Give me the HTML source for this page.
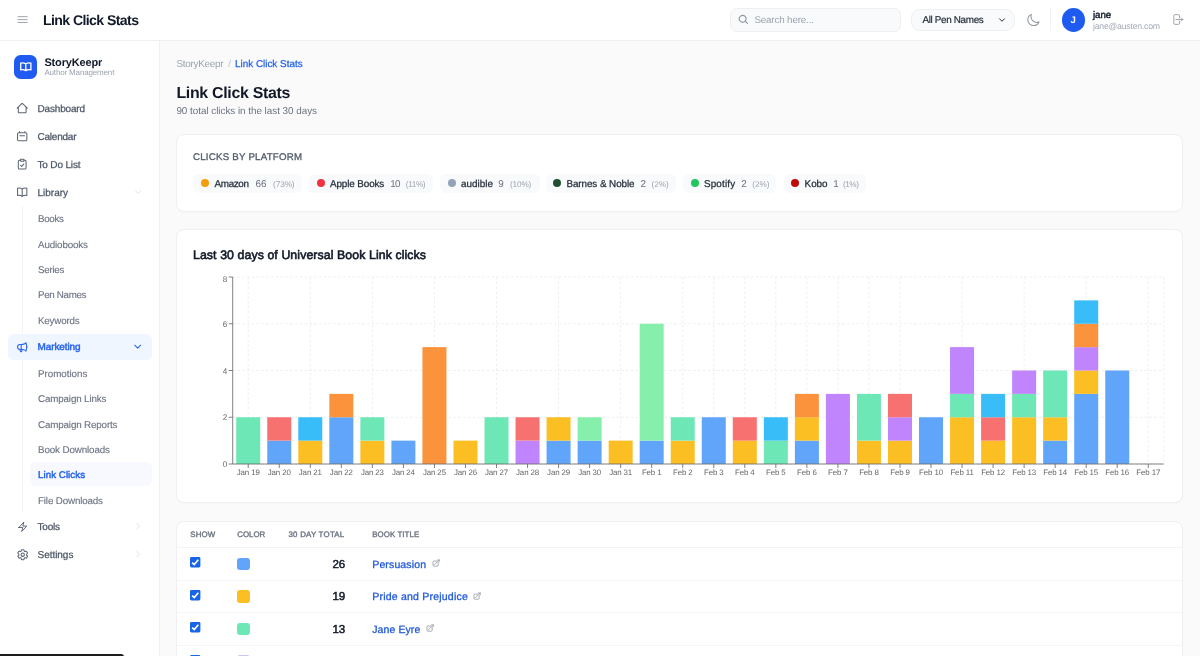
<!DOCTYPE html>
<html lang="en">
<head>
<meta charset="utf-8">
<title>Link Click Stats - StoryKeepr</title>
<style>
*{box-sizing:border-box;margin:0;padding:0}
html,body{width:1200px;height:656px;overflow:hidden;background:#fafafa;font-family:"Liberation Sans",sans-serif;text-rendering:geometricPrecision;-webkit-font-smoothing:antialiased}
body{position:relative}
.t{position:absolute;white-space:nowrap;line-height:1;display:block}
.i{position:absolute;display:block;overflow:visible}
.abs{position:absolute}
header{position:absolute;left:0;top:0;width:1200px;height:41px;background:#fff;border-bottom:1px solid #f0f0f2}
aside{position:absolute;left:0;top:41px;width:160px;height:615px;background:#fff;border-right:1px solid #f0f0f2}
.search{position:absolute;left:730px;top:7.6px;width:171px;height:24px;border:1px solid #eff0f2;border-radius:7px;background:#f9fafb}
.select{position:absolute;left:910.6px;top:8.9px;width:104.8px;height:21.8px;border:1px solid #eff0f2;border-radius:9px;background:#f9fafb}
.vdiv{position:absolute;left:1050px;top:8px;width:1px;height:23px;background:#f1f2f4}
.avatar{position:absolute;left:1061.5px;top:7.9px;width:23.5px;height:23.7px;border-radius:50%;background:#1f5bf1}
.logo{position:absolute;left:13.6px;top:54.8px;width:23.2px;height:24.1px;border-radius:6.6px;background:#1f5bf1}
.guide{position:absolute;left:21.6px;width:1px;background:#f3f4f6}
.act{position:absolute;background:#eff6ff;border-radius:6px}
.card{position:absolute;left:176.4px;width:1007px;background:#fff;border:1px solid #f0f0f2;border-radius:8px;box-shadow:0 1px 2px rgba(0,0,0,.02)}
.chip{position:absolute;top:173.8px;height:19.4px;border-radius:6px;background:#f9fafb}
.chip i{position:absolute;left:7.6px;top:5.7px;width:8px;height:8px;border-radius:50%}
.sw{position:absolute;left:237px;width:12.7px;height:12.5px;border-radius:3px}
.hr{position:absolute;left:177.4px;width:1005px;height:1px;background:#f4f5f7}
.chart{position:absolute;left:176px;top:229px;will-change:transform}
.tx{position:absolute;left:0;top:0;width:1200px;height:656px;will-change:transform}
.blk{position:absolute;left:0;top:654px;width:123.5px;height:3px;background:#1c1c1c;border-top-right-radius:3px}
</style>
</head>
<body>
<header>
<div class="search"></div>
<div class="select"></div>
<div class="vdiv"></div>
<div class="avatar"></div>
</header>
<aside></aside>
<div class="logo"></div>
<div class="guide" style="top:206px;height:127px"></div>
<div class="guide" style="top:360px;height:152px"></div>
<div class="act" style="left:8px;top:333.5px;width:143.6px;height:26px"></div>
<div class="act" style="left:30px;top:462.4px;width:121.6px;height:24px;background:#f7f9fe"></div>
<main>
<section class="card" style="top:134px;height:77.6px"></section>
<section class="card" style="top:228.6px;height:274.8px"></section>
<section class="card" style="top:520.6px;height:160px"></section>
</main>
<div class="chip" style="left:193.2px;width:108.6px"><i style="background:#f59e0b"></i></div><div class="chip" style="left:309.0px;width:123.5px"><i style="background:#ef3340"></i></div><div class="chip" style="left:440.1px;width:99.9px"><i style="background:#94a3b8"></i></div><div class="chip" style="left:545.7px;width:130.3px"><i style="background:#1f5130"></i></div><div class="chip" style="left:683.4px;width:93.1px"><i style="background:#22c55e"></i></div><div class="chip" style="left:783.9px;width:82.1px"><i style="background:#bf0a0a"></i></div>
<div class="hr" style="top:547.2px;background:#f1f2f4"></div>
<div class="hr" style="top:579.8px"></div>
<div class="hr" style="top:612.3px"></div>
<div class="hr" style="top:644.8px"></div>
<div class="sw" style="top:557.6px;background:#60a5fa"></div><div class="sw" style="top:590.1px;background:#fbbf24"></div><div class="sw" style="top:622.6px;background:#6ee7b7"></div><div class="sw" style="top:655.1px;background:#c7c5f4"></div><svg class="i" style="left:190.2px;top:557.4px" width="10.4" height="10.4" viewBox="0 0 13 13"><rect x="0" y="0" width="13" height="13" rx="1.8" fill="#1764e6"/><path d="M2.7 6.9 5.3 9.4 10.4 3.5" fill="none" stroke="#fff" stroke-width="2.2" stroke-linecap="butt" stroke-linejoin="miter"/></svg><svg class="i" style="left:190.2px;top:589.9px" width="10.4" height="10.4" viewBox="0 0 13 13"><rect x="0" y="0" width="13" height="13" rx="1.8" fill="#1764e6"/><path d="M2.7 6.9 5.3 9.4 10.4 3.5" fill="none" stroke="#fff" stroke-width="2.2" stroke-linecap="butt" stroke-linejoin="miter"/></svg><svg class="i" style="left:190.2px;top:622.4px" width="10.4" height="10.4" viewBox="0 0 13 13"><rect x="0" y="0" width="13" height="13" rx="1.8" fill="#1764e6"/><path d="M2.7 6.9 5.3 9.4 10.4 3.5" fill="none" stroke="#fff" stroke-width="2.2" stroke-linecap="butt" stroke-linejoin="miter"/></svg><svg class="i" style="left:190.2px;top:654.9px" width="10.4" height="10.4" viewBox="0 0 13 13"><rect x="0" y="0" width="13" height="13" rx="1.8" fill="#1764e6"/><path d="M2.7 6.9 5.3 9.4 10.4 3.5" fill="none" stroke="#fff" stroke-width="2.2" stroke-linecap="butt" stroke-linejoin="miter"/></svg>
<svg class="chart" width="1008" height="275" viewBox="176 229 1008 275" font-family="Liberation Sans, sans-serif">
<g stroke="#eceef1" stroke-width="1" stroke-dasharray="2.4 2.4" fill="none"><line x1="232.7" y1="464.00" x2="1163.8" y2="464.00"/><line x1="232.7" y1="417.25" x2="1163.8" y2="417.25"/><line x1="232.7" y1="370.50" x2="1163.8" y2="370.50"/><line x1="232.7" y1="323.75" x2="1163.8" y2="323.75"/><line x1="232.7" y1="277.00" x2="1163.8" y2="277.00"/><line x1="248.22" y1="277.0" x2="248.22" y2="464.0"/><line x1="310.29" y1="277.0" x2="310.29" y2="464.0"/><line x1="372.37" y1="277.0" x2="372.37" y2="464.0"/><line x1="434.44" y1="277.0" x2="434.44" y2="464.0"/><line x1="496.51" y1="277.0" x2="496.51" y2="464.0"/><line x1="558.59" y1="277.0" x2="558.59" y2="464.0"/><line x1="620.66" y1="277.0" x2="620.66" y2="464.0"/><line x1="682.73" y1="277.0" x2="682.73" y2="464.0"/><line x1="713.77" y1="277.0" x2="713.77" y2="464.0"/><line x1="744.81" y1="277.0" x2="744.81" y2="464.0"/><line x1="775.84" y1="277.0" x2="775.84" y2="464.0"/><line x1="806.88" y1="277.0" x2="806.88" y2="464.0"/><line x1="837.91" y1="277.0" x2="837.91" y2="464.0"/><line x1="868.95" y1="277.0" x2="868.95" y2="464.0"/><line x1="899.99" y1="277.0" x2="899.99" y2="464.0"/><line x1="962.06" y1="277.0" x2="962.06" y2="464.0"/><line x1="1024.13" y1="277.0" x2="1024.13" y2="464.0"/><line x1="1086.21" y1="277.0" x2="1086.21" y2="464.0"/><line x1="1148.28" y1="277.0" x2="1148.28" y2="464.0"/><line x1="1163.8" y1="277.0" x2="1163.8" y2="464.0"/></g>
<rect x="236.22" y="417.25" width="24.00" height="46.75" fill="#6ee7b7"/>
<rect x="267.25" y="440.62" width="24.00" height="23.38" fill="#60a5fa"/>
<rect x="267.25" y="417.25" width="24.00" height="23.38" fill="#f87171"/>
<rect x="298.29" y="440.62" width="24.00" height="23.38" fill="#fbbf24"/>
<rect x="298.29" y="417.25" width="24.00" height="23.38" fill="#38bdf8"/>
<rect x="329.33" y="417.25" width="24.00" height="46.75" fill="#60a5fa"/>
<rect x="329.33" y="393.88" width="24.00" height="23.38" fill="#fb923c"/>
<rect x="360.36" y="440.62" width="24.00" height="23.38" fill="#fbbf24"/>
<rect x="360.36" y="417.25" width="24.00" height="23.38" fill="#6ee7b7"/>
<rect x="391.40" y="440.62" width="24.00" height="23.38" fill="#60a5fa"/>
<rect x="422.44" y="347.12" width="24.00" height="116.88" fill="#fb923c"/>
<rect x="453.47" y="440.62" width="24.00" height="23.38" fill="#fbbf24"/>
<rect x="484.51" y="417.25" width="24.00" height="46.75" fill="#6ee7b7"/>
<rect x="515.55" y="440.62" width="24.00" height="23.38" fill="#c084fc"/>
<rect x="515.55" y="417.25" width="24.00" height="23.38" fill="#f87171"/>
<rect x="546.58" y="440.62" width="24.00" height="23.38" fill="#60a5fa"/>
<rect x="546.58" y="417.25" width="24.00" height="23.38" fill="#fbbf24"/>
<rect x="577.62" y="440.62" width="24.00" height="23.38" fill="#60a5fa"/>
<rect x="577.62" y="417.25" width="24.00" height="23.38" fill="#86efac"/>
<rect x="608.66" y="440.62" width="24.00" height="23.38" fill="#fbbf24"/>
<rect x="639.69" y="440.62" width="24.00" height="23.38" fill="#60a5fa"/>
<rect x="639.69" y="323.75" width="24.00" height="116.88" fill="#86efac"/>
<rect x="670.73" y="440.62" width="24.00" height="23.38" fill="#fbbf24"/>
<rect x="670.73" y="417.25" width="24.00" height="23.38" fill="#6ee7b7"/>
<rect x="701.77" y="417.25" width="24.00" height="46.75" fill="#60a5fa"/>
<rect x="732.80" y="440.62" width="24.00" height="23.38" fill="#fbbf24"/>
<rect x="732.80" y="417.25" width="24.00" height="23.38" fill="#f87171"/>
<rect x="763.84" y="440.62" width="24.00" height="23.38" fill="#6ee7b7"/>
<rect x="763.84" y="417.25" width="24.00" height="23.38" fill="#38bdf8"/>
<rect x="794.88" y="440.62" width="24.00" height="23.38" fill="#60a5fa"/>
<rect x="794.88" y="417.25" width="24.00" height="23.38" fill="#fbbf24"/>
<rect x="794.88" y="393.88" width="24.00" height="23.38" fill="#fb923c"/>
<rect x="825.91" y="393.88" width="24.00" height="70.12" fill="#c084fc"/>
<rect x="856.95" y="440.62" width="24.00" height="23.38" fill="#fbbf24"/>
<rect x="856.95" y="393.88" width="24.00" height="46.75" fill="#6ee7b7"/>
<rect x="887.99" y="440.62" width="24.00" height="23.38" fill="#fbbf24"/>
<rect x="887.99" y="417.25" width="24.00" height="23.38" fill="#c084fc"/>
<rect x="887.99" y="393.88" width="24.00" height="23.38" fill="#f87171"/>
<rect x="919.02" y="417.25" width="24.00" height="46.75" fill="#60a5fa"/>
<rect x="950.06" y="417.25" width="24.00" height="46.75" fill="#fbbf24"/>
<rect x="950.06" y="393.88" width="24.00" height="23.38" fill="#6ee7b7"/>
<rect x="950.06" y="347.12" width="24.00" height="46.75" fill="#c084fc"/>
<rect x="981.10" y="440.62" width="24.00" height="23.38" fill="#fbbf24"/>
<rect x="981.10" y="417.25" width="24.00" height="23.38" fill="#f87171"/>
<rect x="981.10" y="393.88" width="24.00" height="23.38" fill="#38bdf8"/>
<rect x="1012.13" y="417.25" width="24.00" height="46.75" fill="#fbbf24"/>
<rect x="1012.13" y="393.88" width="24.00" height="23.38" fill="#6ee7b7"/>
<rect x="1012.13" y="370.50" width="24.00" height="23.38" fill="#c084fc"/>
<rect x="1043.17" y="440.62" width="24.00" height="23.38" fill="#60a5fa"/>
<rect x="1043.17" y="417.25" width="24.00" height="23.38" fill="#fbbf24"/>
<rect x="1043.17" y="370.50" width="24.00" height="46.75" fill="#6ee7b7"/>
<rect x="1074.21" y="393.88" width="24.00" height="70.12" fill="#60a5fa"/>
<rect x="1074.21" y="370.50" width="24.00" height="23.38" fill="#fbbf24"/>
<rect x="1074.21" y="347.12" width="24.00" height="23.38" fill="#c084fc"/>
<rect x="1074.21" y="323.75" width="24.00" height="23.38" fill="#fb923c"/>
<rect x="1074.21" y="300.38" width="24.00" height="23.38" fill="#38bdf8"/>
<rect x="1105.25" y="370.50" width="24.00" height="93.50" fill="#60a5fa"/>
<g stroke="#6a6a6a" stroke-width="0.85" fill="none"><line x1="232.7" y1="277.0" x2="232.7" y2="464.0"/><line x1="232.7" y1="464.0" x2="1163.8" y2="464.0"/><line x1="228.7" y1="464.00" x2="232.7" y2="464.00"/><line x1="228.7" y1="417.25" x2="232.7" y2="417.25"/><line x1="228.7" y1="370.50" x2="232.7" y2="370.50"/><line x1="228.7" y1="323.75" x2="232.7" y2="323.75"/><line x1="228.7" y1="277.00" x2="232.7" y2="277.00"/><line x1="248.22" y1="464.0" x2="248.22" y2="468.0"/><line x1="279.25" y1="464.0" x2="279.25" y2="468.0"/><line x1="310.29" y1="464.0" x2="310.29" y2="468.0"/><line x1="341.33" y1="464.0" x2="341.33" y2="468.0"/><line x1="372.37" y1="464.0" x2="372.37" y2="468.0"/><line x1="403.40" y1="464.0" x2="403.40" y2="468.0"/><line x1="434.44" y1="464.0" x2="434.44" y2="468.0"/><line x1="465.47" y1="464.0" x2="465.47" y2="468.0"/><line x1="496.51" y1="464.0" x2="496.51" y2="468.0"/><line x1="527.55" y1="464.0" x2="527.55" y2="468.0"/><line x1="558.59" y1="464.0" x2="558.59" y2="468.0"/><line x1="589.62" y1="464.0" x2="589.62" y2="468.0"/><line x1="620.66" y1="464.0" x2="620.66" y2="468.0"/><line x1="651.69" y1="464.0" x2="651.69" y2="468.0"/><line x1="682.73" y1="464.0" x2="682.73" y2="468.0"/><line x1="713.77" y1="464.0" x2="713.77" y2="468.0"/><line x1="744.81" y1="464.0" x2="744.81" y2="468.0"/><line x1="775.84" y1="464.0" x2="775.84" y2="468.0"/><line x1="806.88" y1="464.0" x2="806.88" y2="468.0"/><line x1="837.91" y1="464.0" x2="837.91" y2="468.0"/><line x1="868.95" y1="464.0" x2="868.95" y2="468.0"/><line x1="899.99" y1="464.0" x2="899.99" y2="468.0"/><line x1="931.02" y1="464.0" x2="931.02" y2="468.0"/><line x1="962.06" y1="464.0" x2="962.06" y2="468.0"/><line x1="993.10" y1="464.0" x2="993.10" y2="468.0"/><line x1="1024.13" y1="464.0" x2="1024.13" y2="468.0"/><line x1="1055.17" y1="464.0" x2="1055.17" y2="468.0"/><line x1="1086.21" y1="464.0" x2="1086.21" y2="468.0"/><line x1="1117.24" y1="464.0" x2="1117.24" y2="468.0"/><line x1="1148.28" y1="464.0" x2="1148.28" y2="468.0"/></g>
<g fill="#6a6a6a" font-size="8.2"><text x="227.29999999999998" y="467.00" text-anchor="end">0</text><text x="227.29999999999998" y="420.25" text-anchor="end">2</text><text x="227.29999999999998" y="373.50" text-anchor="end">4</text><text x="227.29999999999998" y="326.75" text-anchor="end">6</text><text x="227.29999999999998" y="282.30" text-anchor="end">8</text></g>
<g fill="#666" font-size="7.9" letter-spacing="-0.12"><text x="248.22" y="474.7" text-anchor="middle">Jan 19</text><text x="279.25" y="474.7" text-anchor="middle">Jan 20</text><text x="310.29" y="474.7" text-anchor="middle">Jan 21</text><text x="341.33" y="474.7" text-anchor="middle">Jan 22</text><text x="372.37" y="474.7" text-anchor="middle">Jan 23</text><text x="403.40" y="474.7" text-anchor="middle">Jan 24</text><text x="434.44" y="474.7" text-anchor="middle">Jan 25</text><text x="465.47" y="474.7" text-anchor="middle">Jan 26</text><text x="496.51" y="474.7" text-anchor="middle">Jan 27</text><text x="527.55" y="474.7" text-anchor="middle">Jan 28</text><text x="558.59" y="474.7" text-anchor="middle">Jan 29</text><text x="589.62" y="474.7" text-anchor="middle">Jan 30</text><text x="620.66" y="474.7" text-anchor="middle">Jan 31</text><text x="651.69" y="474.7" text-anchor="middle">Feb 1</text><text x="682.73" y="474.7" text-anchor="middle">Feb 2</text><text x="713.77" y="474.7" text-anchor="middle">Feb 3</text><text x="744.81" y="474.7" text-anchor="middle">Feb 4</text><text x="775.84" y="474.7" text-anchor="middle">Feb 5</text><text x="806.88" y="474.7" text-anchor="middle">Feb 6</text><text x="837.91" y="474.7" text-anchor="middle">Feb 7</text><text x="868.95" y="474.7" text-anchor="middle">Feb 8</text><text x="899.99" y="474.7" text-anchor="middle">Feb 9</text><text x="931.02" y="474.7" text-anchor="middle">Feb 10</text><text x="962.06" y="474.7" text-anchor="middle">Feb 11</text><text x="993.10" y="474.7" text-anchor="middle">Feb 12</text><text x="1024.13" y="474.7" text-anchor="middle">Feb 13</text><text x="1055.17" y="474.7" text-anchor="middle">Feb 14</text><text x="1086.21" y="474.7" text-anchor="middle">Feb 15</text><text x="1117.24" y="474.7" text-anchor="middle">Feb 16</text><text x="1148.28" y="474.7" text-anchor="middle">Feb 17</text></g>
</svg>
<svg class="i" style="left:17px;top:14px" width="11.2" height="11.2" viewBox="0 0 24 24" fill="none" stroke="#9a9ea6" stroke-width="2.0" stroke-linecap="round" stroke-linejoin="round" ><path d="M1.3 5.7h21.4M1.3 12h21.4M1.3 18.2h21.4" stroke-linecap="butt"/></svg>
<svg class="i" style="left:738.2px;top:14.2px" width="10.8" height="10.8" viewBox="0 0 24 24" fill="none" stroke="#9299a6" stroke-width="2.6" stroke-linecap="round" stroke-linejoin="round" ><path d="m21 21-5.197-5.197m0 0A7.5 7.5 0 1 0 5.196 5.196a7.5 7.5 0 0 0 10.607 10.607Z"/></svg>
<svg class="i" style="left:997.6px;top:15.7px" width="8.0" height="8.0" viewBox="0 0 24 24" fill="none" stroke="#2f3541" stroke-width="3.0" stroke-linecap="round" stroke-linejoin="round" ><path d="m19.5 8.25-7.5 7.5-7.5-7.5"/></svg>
<svg class="i" style="left:1025.6px;top:12.7px" width="14.4" height="14.4" viewBox="0 0 24 24" fill="none" stroke="#8f949c" stroke-width="1.7" stroke-linecap="round" stroke-linejoin="round" ><path d="M21.752 15.002A9.72 9.72 0 0 1 18 15.75c-5.385 0-9.75-4.365-9.75-9.75 0-1.33.266-2.597.748-3.752A9.753 9.753 0 0 0 3 11.25C3 16.635 7.365 21 12.75 21a9.753 9.753 0 0 0 9.002-5.998Z"/></svg>
<svg class="i" style="left:1170.6px;top:12.9px" width="13" height="13" viewBox="0 0 24 24" fill="none" stroke="#9a9ea6" stroke-width="1.7" stroke-linecap="round" stroke-linejoin="round" ><path d="M15.75 9V5.25A2.25 2.25 0 0 0 13.5 3h-6a2.25 2.25 0 0 0-2.25 2.25v13.5A2.25 2.25 0 0 0 7.5 21h6a2.25 2.25 0 0 0 2.25-2.25V15m3 0 3-3m0 0-3-3m3 3H9"/></svg>
<svg class="i" style="left:18.55px;top:59.9px" width="13.6" height="13.6" viewBox="0 0 24 24" fill="none" stroke="#ffffff" stroke-width="2.3" stroke-linecap="round" stroke-linejoin="round" ><g transform="translate(0 12) scale(1 .84) translate(0 -12)"><path d="M12 6.042A8.967 8.967 0 0 0 6 3.75c-1.052 0-2.062.18-3 .512v14.25A8.987 8.987 0 0 1 6 18c2.305 0 4.408.867 6 2.292m0-14.25a8.966 8.966 0 0 1 6-2.292c1.052 0 2.062.18 3 .512v14.25A8.987 8.987 0 0 0 18 18a8.967 8.967 0 0 0-6 2.292m0-14.25v14.25"/></g></svg>
<svg class="i" style="left:16.2px;top:101.9px" width="12.4" height="12.4" viewBox="0 0 24 24" fill="none" stroke="#5b6472" stroke-width="2.0" stroke-linecap="round" stroke-linejoin="round" ><path d="m2.25 12 8.954-8.955c.44-.439 1.152-.439 1.591 0L21.75 12M4.5 9.75v10.125c0 .621.504 1.125 1.125 1.125h12.75c.621 0 1.125-.504 1.125-1.125V9.75"/></svg>
<svg class="i" style="left:16.2px;top:129.9px" width="12.4" height="12.4" viewBox="0 0 24 24" fill="none" stroke="#5b6472" stroke-width="2.0" stroke-linecap="round" stroke-linejoin="round" ><path d="M6.75 3v2.25M17.25 3v2.25M3 18.75V7.5a2.25 2.25 0 0 1 2.25-2.25h13.5A2.25 2.25 0 0 1 21 7.5v11.25A2.25 2.25 0 0 1 18.75 21H5.25A2.25 2.25 0 0 1 3 18.75ZM7.5 11.25h9"/></svg>
<svg class="i" style="left:16.2px;top:157.9px" width="12.4" height="12.4" viewBox="0 0 24 24" fill="none" stroke="#5b6472" stroke-width="2.0" stroke-linecap="round" stroke-linejoin="round" ><rect x="8.5" y="2.5" width="7" height="3.6" rx="1"/><path d="M15.5 4.3h1.75a2.25 2.25 0 0 1 2.25 2.25v12.7a2.25 2.25 0 0 1-2.25 2.25H6.75a2.25 2.25 0 0 1-2.25-2.25V6.55A2.25 2.25 0 0 1 6.75 4.3H8.5M9 14.2l2.1 2.1 3.9-4.4"/></svg>
<svg class="i" style="left:16.2px;top:185.9px" width="12.4" height="12.4" viewBox="0 0 24 24" fill="none" stroke="#5b6472" stroke-width="2.0" stroke-linecap="round" stroke-linejoin="round" ><path d="M12 6.042A8.967 8.967 0 0 0 6 3.75c-1.052 0-2.062.18-3 .512v14.25A8.987 8.987 0 0 1 6 18c2.305 0 4.408.867 6 2.292m0-14.25a8.966 8.966 0 0 1 6-2.292c1.052 0 2.062.18 3 .512v14.25A8.987 8.987 0 0 0 18 18a8.967 8.967 0 0 0-6 2.292m0-14.25v14.25"/></svg>
<svg class="i" style="left:133.8px;top:187.8px" width="8.4" height="8.4" viewBox="0 0 24 24" fill="none" stroke="#d1d5db" stroke-width="2" stroke-linecap="round" stroke-linejoin="round" ><path d="m19.5 8.25-7.5 7.5-7.5-7.5"/></svg>
<svg class="i" style="left:16.4px;top:340.6px" width="12.6" height="12.6" viewBox="0 0 24 24" fill="none" stroke="#2563eb" stroke-width="2.0" stroke-linecap="round" stroke-linejoin="round" ><path d="M10.34 15.84c-.688-.06-1.386-.09-2.09-.09H7.5a4.5 4.5 0 1 1 0-9h.75c.704 0 1.402-.03 2.09-.09m0 9.18c.253.962.584 1.892.985 2.783.247.55.06 1.21-.463 1.511l-.657.38c-.551.318-1.26.117-1.527-.461a20.845 20.845 0 0 1-1.44-4.282m3.102.069a18.03 18.03 0 0 1-.59-4.59c0-1.586.205-3.124.59-4.59m0 9.18a23.848 23.848 0 0 1 8.835 2.535M10.34 6.66a23.847 23.847 0 0 0 8.835-2.535m0 0A23.74 23.74 0 0 0 18.795 3m.38 1.125a23.91 23.91 0 0 1 1.014 5.395m-1.014 8.855c-.118.38-.245.754-.38 1.125m.38-1.125a23.91 23.91 0 0 0 1.014-5.395m0-3.46c.495.413.811 1.035.811 1.73 0 .695-.316 1.317-.811 1.73m0-3.46a24.347 24.347 0 0 1 0 3.46"/></svg>
<svg class="i" style="left:133.4px;top:342.4px" width="9.4" height="9.4" viewBox="0 0 24 24" fill="none" stroke="#2563eb" stroke-width="2.6" stroke-linecap="round" stroke-linejoin="round" ><path d="m19.5 8.25-7.5 7.5-7.5-7.5"/></svg>
<svg class="i" style="left:17.1px;top:521.2px" width="11.6" height="11.6" viewBox="0 0 24 24" fill="none" stroke="#5b6472" stroke-width="2.0" stroke-linecap="round" stroke-linejoin="round" ><path d="m3.75 13.5 10.5-11.25L12 10.5h8.25L9.75 21.75 12 13.5H3.75Z"/></svg>
<svg class="i" style="left:133.8px;top:522.4px" width="8.4" height="8.4" viewBox="0 0 24 24" fill="none" stroke="#d1d5db" stroke-width="2" stroke-linecap="round" stroke-linejoin="round" ><path d="m8.25 4.5 7.5 7.5-7.5 7.5"/></svg>
<svg class="i" style="left:16.0px;top:547.9px" width="13.4" height="13.4" viewBox="0 0 24 24" fill="none" stroke="#5b6472" stroke-width="1.9" stroke-linecap="round" stroke-linejoin="round" ><path d="M9.594 3.94c.09-.542.56-.94 1.11-.94h2.593c.55 0 1.02.398 1.11.94l.213 1.281c.063.374.313.686.645.87.074.04.147.083.22.127.325.196.72.257 1.075.124l1.217-.456a1.125 1.125 0 0 1 1.37.49l1.296 2.247a1.125 1.125 0 0 1-.26 1.431l-1.003.827c-.293.241-.438.613-.43.992a7.723 7.723 0 0 1 0 .255c-.008.378.137.75.43.991l1.004.827c.424.35.534.955.26 1.43l-1.298 2.247a1.125 1.125 0 0 1-1.369.491l-1.217-.456c-.355-.133-.75-.072-1.076.124a6.47 6.47 0 0 1-.22.128c-.331.183-.581.495-.644.869l-.213 1.281c-.09.543-.56.94-1.11.94h-2.594c-.55 0-1.019-.398-1.11-.94l-.213-1.281c-.062-.374-.312-.686-.644-.87a6.52 6.52 0 0 1-.22-.127c-.325-.196-.72-.257-1.076-.124l-1.217.456a1.125 1.125 0 0 1-1.369-.49l-1.297-2.247a1.125 1.125 0 0 1 .26-1.431l1.004-.827c.292-.24.437-.613.43-.991a6.932 6.932 0 0 1 0-.255c.007-.38-.138-.751-.43-.992l-1.004-.827a1.125 1.125 0 0 1-.26-1.43l1.297-2.247a1.125 1.125 0 0 1 1.37-.491l1.216.456c.356.133.751.072 1.076-.124.072-.044.146-.086.22-.128.332-.183.582-.495.644-.869l.214-1.28Z"/><path d="M15 12a3 3 0 1 1-6 0 3 3 0 0 1 6 0Z"/></svg>
<svg class="i" style="left:133.8px;top:550.4px" width="8.4" height="8.4" viewBox="0 0 24 24" fill="none" stroke="#d1d5db" stroke-width="2" stroke-linecap="round" stroke-linejoin="round" ><path d="m8.25 4.5 7.5 7.5-7.5 7.5"/></svg>
<svg class="i" style="left:432.2px;top:559.2px" width="8.2" height="8.2" viewBox="0 0 24 24" fill="none" stroke="#989da6" stroke-width="2.5" stroke-linecap="round" stroke-linejoin="round" ><path d="M13.5 6H5.25A2.25 2.25 0 0 0 3 8.25v10.5A2.25 2.25 0 0 0 5.25 21h10.5A2.25 2.25 0 0 0 18 18.75V10.5m-10.5 6L21 3m0 0h-5.25M21 3v5.25"/></svg>
<svg class="i" style="left:473.4px;top:591.7px" width="8.2" height="8.2" viewBox="0 0 24 24" fill="none" stroke="#989da6" stroke-width="2.5" stroke-linecap="round" stroke-linejoin="round" ><path d="M13.5 6H5.25A2.25 2.25 0 0 0 3 8.25v10.5A2.25 2.25 0 0 0 5.25 21h10.5A2.25 2.25 0 0 0 18 18.75V10.5m-10.5 6L21 3m0 0h-5.25M21 3v5.25"/></svg>
<svg class="i" style="left:425.9px;top:624.2px" width="8.2" height="8.2" viewBox="0 0 24 24" fill="none" stroke="#989da6" stroke-width="2.5" stroke-linecap="round" stroke-linejoin="round" ><path d="M13.5 6H5.25A2.25 2.25 0 0 0 3 8.25v10.5A2.25 2.25 0 0 0 5.25 21h10.5A2.25 2.25 0 0 0 18 18.75V10.5m-10.5 6L21 3m0 0h-5.25M21 3v5.25"/></svg>
<div class="tx">
<span class="t" style="top:13px;font-size:14.1px;color:#111827;font-weight:700;letter-spacing:-0.597px;left:43.00px;">Link Click Stats</span>
<span class="t" style="top:16px;font-size:9.8px;color:#9ca3af;letter-spacing:-0.150px;left:754.40px;">Search here...</span>
<span class="t" style="top:16px;font-size:9.9px;color:#1f2937;letter-spacing:-0.339px;left:922.50px;-webkit-text-stroke:0.2px #1f2937;">All Pen Names</span>
<span class="t" style="top:16px;font-size:9.6px;color:#ffffff;font-weight:700;left:973.10px;width:200px;text-align:center;">J</span>
<span class="t" style="top:11px;font-size:9.7px;color:#111827;letter-spacing:-0.043px;left:1093.00px;-webkit-text-stroke:0.4px #111827;">jane</span>
<span class="t" style="top:22px;font-size:8.7px;color:#a3a9b4;letter-spacing:-0.225px;left:1093.00px;">jane@austen.com</span>
<span class="t" style="top:58px;font-size:11.0px;color:#111827;font-weight:700;letter-spacing:-0.144px;left:44.40px;">StoryKeepr</span>
<span class="t" style="top:69px;font-size:8.0px;color:#9ca3af;letter-spacing:-0.156px;left:44.40px;">Author Management</span>
<span class="t" style="top:105px;font-size:10.0px;color:#4b5563;letter-spacing:-0.178px;left:37.50px;-webkit-text-stroke:0.25px #4b5563;">Dashboard</span>
<span class="t" style="top:133px;font-size:10.0px;color:#4b5563;letter-spacing:-0.228px;left:37.50px;-webkit-text-stroke:0.25px #4b5563;">Calendar</span>
<span class="t" style="top:161px;font-size:10.0px;color:#4b5563;letter-spacing:-0.163px;left:37.50px;-webkit-text-stroke:0.25px #4b5563;">To Do List</span>
<span class="t" style="top:189px;font-size:10.0px;color:#4b5563;letter-spacing:0.004px;left:37.50px;-webkit-text-stroke:0.25px #4b5563;">Library</span>
<span class="t" style="top:343px;font-size:10.0px;color:#2563eb;letter-spacing:-0.113px;left:37.50px;-webkit-text-stroke:0.45px #2563eb;">Marketing</span>
<span class="t" style="top:523px;font-size:10.0px;color:#4b5563;letter-spacing:-0.215px;left:37.50px;-webkit-text-stroke:0.25px #4b5563;">Tools</span>
<span class="t" style="top:551px;font-size:10.0px;color:#4b5563;letter-spacing:-0.034px;left:37.50px;-webkit-text-stroke:0.25px #4b5563;">Settings</span>
<span class="t" style="top:215px;font-size:9.8px;color:#6b7280;letter-spacing:-0.334px;left:38.00px;-webkit-text-stroke:0.12px #6b7280;">Books</span>
<span class="t" style="top:241px;font-size:9.8px;color:#6b7280;letter-spacing:-0.134px;left:38.00px;-webkit-text-stroke:0.12px #6b7280;">Audiobooks</span>
<span class="t" style="top:266px;font-size:9.8px;color:#6b7280;letter-spacing:-0.276px;left:38.00px;-webkit-text-stroke:0.12px #6b7280;">Series</span>
<span class="t" style="top:291px;font-size:9.8px;color:#6b7280;letter-spacing:-0.336px;left:38.00px;-webkit-text-stroke:0.12px #6b7280;">Pen Names</span>
<span class="t" style="top:317px;font-size:9.8px;color:#6b7280;letter-spacing:-0.188px;left:38.00px;-webkit-text-stroke:0.12px #6b7280;">Keywords</span>
<span class="t" style="top:370px;font-size:9.8px;color:#6b7280;letter-spacing:-0.029px;left:38.00px;-webkit-text-stroke:0.12px #6b7280;">Promotions</span>
<span class="t" style="top:395px;font-size:9.8px;color:#6b7280;letter-spacing:-0.142px;left:38.00px;-webkit-text-stroke:0.12px #6b7280;">Campaign Links</span>
<span class="t" style="top:421px;font-size:9.8px;color:#6b7280;letter-spacing:-0.146px;left:38.00px;-webkit-text-stroke:0.12px #6b7280;">Campaign Reports</span>
<span class="t" style="top:446px;font-size:9.8px;color:#6b7280;letter-spacing:-0.118px;left:38.00px;-webkit-text-stroke:0.12px #6b7280;">Book Downloads</span>
<span class="t" style="top:497px;font-size:9.8px;color:#6b7280;letter-spacing:-0.153px;left:38.00px;-webkit-text-stroke:0.12px #6b7280;">File Downloads</span>
<span class="t" style="top:471px;font-size:9.7px;color:#2563eb;letter-spacing:0.070px;left:38.00px;-webkit-text-stroke:0.45px #2563eb;">Link Clicks</span>
<span class="t" style="top:60px;font-size:9.89px;color:#9ca3af;letter-spacing:-0.245px;left:176.40px;">StoryKeepr</span>
<span class="t" style="top:60px;font-size:9.89px;color:#c0c4cc;left:228.30px;">/</span>
<span class="t" style="top:60px;font-size:9.89px;color:#2563eb;letter-spacing:0.006px;left:235.00px;-webkit-text-stroke:0.25px #2563eb;">Link Click Stats</span>
<span class="t" style="top:86px;font-size:15.9px;color:#111827;font-weight:700;letter-spacing:-0.290px;left:176.40px;">Link Click Stats</span>
<span class="t" style="top:107px;font-size:9.89px;color:#6b7280;letter-spacing:-0.030px;left:176.40px;">90 total clicks in the last 30 days</span>
<span class="t" style="top:153px;font-size:9.7px;color:#525c6b;letter-spacing:0.226px;left:193.00px;-webkit-text-stroke:0.32px #525c6b;">CLICKS BY PLATFORM</span>
<span class="t" style="top:180px;font-size:9.89px;color:#1f2937;letter-spacing:-0.367px;left:214.60px;-webkit-text-stroke:0.25px #1f2937;">Amazon</span>
<span class="t" style="top:180px;font-size:9.9px;color:#6b7280;letter-spacing:0.216px;left:255.40px;">66</span>
<span class="t" style="top:181px;font-size:8.24px;color:#9ca3af;letter-spacing:-0.092px;left:273.00px;">(73%)</span>
<span class="t" style="top:180px;font-size:9.89px;color:#1f2937;letter-spacing:-0.115px;left:330.00px;-webkit-text-stroke:0.25px #1f2937;">Apple Books</span>
<span class="t" style="top:180px;font-size:9.9px;color:#6b7280;letter-spacing:-0.784px;left:390.30px;">10</span>
<span class="t" style="top:181px;font-size:8.24px;color:#9ca3af;letter-spacing:-0.390px;left:405.80px;">(11%)</span>
<span class="t" style="top:180px;font-size:9.89px;color:#1f2937;letter-spacing:0.023px;left:460.90px;-webkit-text-stroke:0.25px #1f2937;">audible</span>
<span class="t" style="top:180px;font-size:9.9px;color:#6b7280;left:498.30px;">9</span>
<span class="t" style="top:181px;font-size:8.24px;color:#9ca3af;letter-spacing:-0.167px;left:510.00px;">(10%)</span>
<span class="t" style="top:180px;font-size:9.89px;color:#1f2937;letter-spacing:-0.075px;left:566.40px;-webkit-text-stroke:0.25px #1f2937;">Barnes &amp; Noble</span>
<span class="t" style="top:180px;font-size:9.9px;color:#6b7280;left:640.50px;">2</span>
<span class="t" style="top:181px;font-size:8.24px;color:#9ca3af;letter-spacing:-0.030px;left:651.50px;">(2%)</span>
<span class="t" style="top:180px;font-size:9.89px;color:#1f2937;letter-spacing:0.183px;left:703.90px;-webkit-text-stroke:0.25px #1f2937;">Spotify</span>
<span class="t" style="top:180px;font-size:9.9px;color:#6b7280;left:741.20px;">2</span>
<span class="t" style="top:181px;font-size:8.24px;color:#9ca3af;letter-spacing:-0.030px;left:752.30px;">(2%)</span>
<span class="t" style="top:180px;font-size:9.89px;color:#1f2937;letter-spacing:-0.026px;left:804.60px;-webkit-text-stroke:0.25px #1f2937;">Kobo</span>
<span class="t" style="top:180px;font-size:9.9px;color:#6b7280;left:833.30px;">1</span>
<span class="t" style="top:181px;font-size:8.24px;color:#9ca3af;letter-spacing:-0.464px;left:842.90px;">(1%)</span>
<span class="t" style="top:249px;font-size:12.3px;color:#111827;letter-spacing:0.098px;left:193.00px;-webkit-text-stroke:0.6px #111827;">Last 30 days of Universal Book Link clicks</span>
<span class="t" style="top:531px;font-size:7.9px;color:#6b7280;letter-spacing:0.151px;left:190.25px;-webkit-text-stroke:0.35px #6b7280;">SHOW</span>
<span class="t" style="top:531px;font-size:7.9px;color:#6b7280;letter-spacing:-0.016px;left:237.25px;-webkit-text-stroke:0.35px #6b7280;">COLOR</span>
<span class="t" style="top:531px;font-size:7.9px;color:#6b7280;letter-spacing:0.230px;right:855.52px;-webkit-text-stroke:0.35px #6b7280;">30 DAY TOTAL</span>
<span class="t" style="top:531px;font-size:7.9px;color:#6b7280;letter-spacing:0.073px;left:372.25px;-webkit-text-stroke:0.35px #6b7280;">BOOK TITLE</span>
<span class="t" style="top:560px;font-size:11.54px;color:#111827;letter-spacing:-0.028px;right:854.78px;-webkit-text-stroke:0.5px #111827;">26</span>
<span class="t" style="top:560px;font-size:10.5px;color:#2159d9;letter-spacing:0.135px;left:372.25px;-webkit-text-stroke:0.3px #2159d9;">Persuasion</span>
<span class="t" style="top:592px;font-size:11.54px;color:#111827;letter-spacing:-0.028px;right:854.78px;-webkit-text-stroke:0.5px #111827;">19</span>
<span class="t" style="top:592px;font-size:10.5px;color:#2159d9;letter-spacing:0.214px;left:372.25px;-webkit-text-stroke:0.3px #2159d9;">Pride and Prejudice</span>
<span class="t" style="top:625px;font-size:11.54px;color:#111827;letter-spacing:-0.028px;right:854.78px;-webkit-text-stroke:0.5px #111827;">13</span>
<span class="t" style="top:625px;font-size:10.5px;color:#2159d9;letter-spacing:0.090px;left:372.25px;-webkit-text-stroke:0.3px #2159d9;">Jane Eyre</span>
</div>
<div class="blk"></div>
</body>
</html>
